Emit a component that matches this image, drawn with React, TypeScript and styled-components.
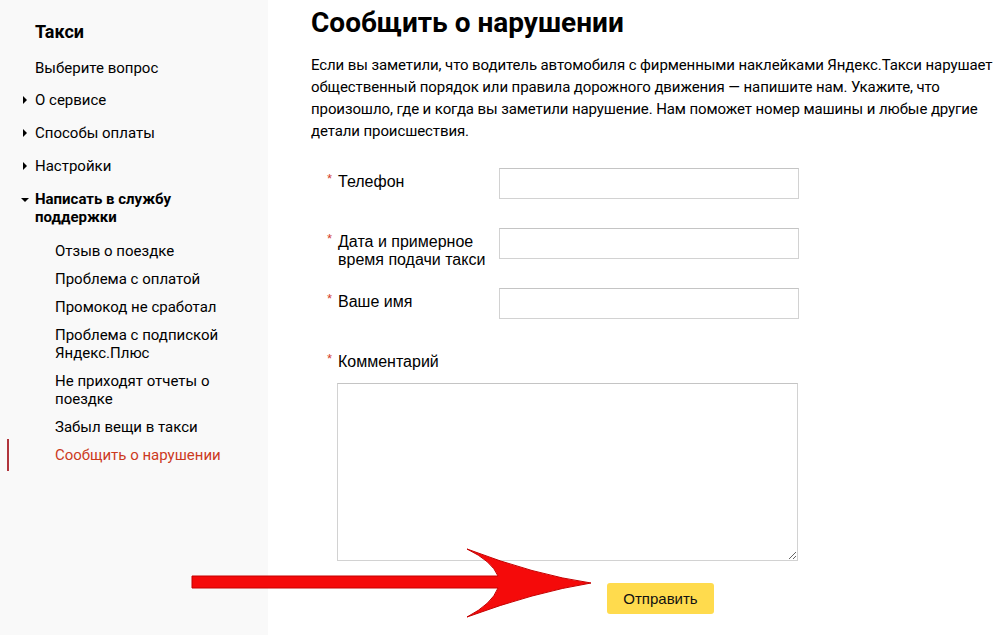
import { Fragment } from "react"
import styled, { createGlobalStyle } from "styled-components"

const Global = createGlobalStyle`
    html, body {
        margin: 0;
        padding: 0;
        background: #fff;
    }
    * {
        box-sizing: border-box;
    }
`

const Page = styled('div')`
    position: relative;
    display: flex;
    width: 1008px;
    height: 635px;
    overflow: hidden;
    font-family: Roboto, "Liberation Sans", Arial, sans-serif;
    color: #000;
`

const Sidebar = styled('aside')`
    width: 268px;
    flex-shrink: 0;
    background: #f9f9f9;
    padding: 21px 0 0 35px;

    .title {
        margin: 0 0 16px;
        font-size: 18px;
        line-height: 22px;
        font-weight: 700;
    }

    .hint {
        margin: 0 0 14px;
        font-size: 15px;
        line-height: 18px;
    }
`

const NavList = styled('ul')`
    list-style: none;
    margin: 0;
    padding: 0;
`

const NavItem = styled('li')<{ $open?: boolean }>`
    position: relative;
    margin-bottom: 15px;
    font-size: 15px;
    line-height: 18px;

    .caption {
        display: block;
        max-width: 150px;
        font-weight: ${p => p.$open ? 700 : 400};
    }

    &::before {
        content: "";
        position: absolute;
        top: ${p => p.$open ? '8px' : '5px'};
        left: ${p => p.$open ? '-14px' : '-12px'};
        border-style: solid;
        border-color: transparent;
        ${p => p.$open
            ? 'border-width: 4px 4px 0 4px; border-top-color: #000;'
            : 'border-width: 4px 0 4px 4px; border-left-color: #000;'}
    }
`

const SubList = styled('ul')`
    list-style: none;
    margin: 16px 0 0 20px;
    padding: 0;
`

const SubItem = styled('li')<{ $active?: boolean }>`
    position: relative;
    margin-bottom: 10px;
    font-size: 15px;
    line-height: 18px;
    max-width: 168px;
    color: ${p => p.$active ? '#cc3a1e' : '#000'};

    ${p => p.$active && `
        &::before {
            content: "";
            position: absolute;
            left: -48px;
            top: -7px;
            width: 2px;
            height: 32px;
            background: #b0343c;
        }
    `}
`

const Main = styled('main')`
    flex: 1;
    padding: 6px 0 0 43px;

    h1 {
        margin: 0 0 14px;
        font-size: 28px;
        line-height: 34px;
        font-weight: 700;
    }

    .intro {
        margin: 0 0 26px;
        font-size: 15px;
        line-height: 22px;
        letter-spacing: -0.1px;
        white-space: nowrap;
    }
`

const Form = styled('form')`
    padding-left: 16px;
    font-family: "Liberation Sans", Arial, sans-serif;
`

const Row = styled('div')`
    display: flex;
    align-items: flex-start;
    height: 60px;
`

const Label = styled('label')<{ $wide?: boolean }>`
    position: relative;
    display: block;
    width: ${p => p.$wide ? 'auto' : '172px'};
    padding: 5px 0 0 11px;
    font-size: 16px;
    line-height: 18px;

    span {
        position: absolute;
        left: 0;
        top: 2px;
        color: #d3402a;
        font-size: 13px;
    }
`

const Input = styled('input')`
    width: 300px;
    height: 31px;
    border: 1px solid #d2d2d2;
    border-top-color: #c4c4c4;
    background: #fff;
    outline: none;
    font-size: 15px;
`

const CommentBlock = styled('div')`
    display: flex;
    flex-direction: column;
    align-items: flex-start;
`

const TextArea = styled('textarea')`
    margin: 12px 0 0 10px;
    width: 461px;
    height: 178px;
    border: 1px solid #d2d2d2;
    border-top-color: #c4c4c4;
    background: #fff;
    outline: none;
`

const Submit = styled('button')`
    margin: 22px 0 0 280px;
    width: 107px;
    height: 31px;
    border: none;
    border-radius: 3px;
    background: #ffdb4d;
    font-family: "Liberation Sans", Arial, sans-serif;
    font-size: 15px;
    color: #111;
    cursor: pointer;
`

const Arrow = styled('svg')`
    position: absolute;
    left: 0;
    top: 0;
    pointer-events: none;
`

const subItems = [
    "Отзыв о поездке",
    "Проблема с оплатой",
    "Промокод не сработал",
    "Проблема с подпиской Яндекс.Плюс",
    "Не приходят отчеты о поездке",
    "Забыл вещи в такси",
]

const App = (): JSX.Element => {
    return (
        <Fragment>
            <Global />
            <Page>
                <Sidebar>
                    <p className="title">Такси</p>
                    <p className="hint">Выберите вопрос</p>
                    <NavList>
                        <NavItem><span className="caption">О сервисе</span></NavItem>
                        <NavItem><span className="caption">Способы оплаты</span></NavItem>
                        <NavItem><span className="caption">Настройки</span></NavItem>
                        <NavItem $open>
                            <span className="caption">Написать в службу поддержки</span>
                            <SubList>
                                {subItems.map((v, i) => <SubItem key={i}>{v}</SubItem>)}
                                <SubItem $active>Сообщить о нарушении</SubItem>
                            </SubList>
                        </NavItem>
                    </NavList>
                </Sidebar>

                <Main>
                    <h1>Сообщить о нарушении</h1>
                    <p className="intro">
                        Если вы заметили, что водитель автомобиля с фирменными наклейками Яндекс.Такси нарушает<br />
                        общественный порядок или правила дорожного движения — напишите нам. Укажите, что<br />
                        произошло, где и когда вы заметили нарушение. Нам поможет номер машины и любые другие<br />
                        детали происшествия.
                    </p>

                    <Form onSubmit={e => e.preventDefault()}>
                        <Row>
                            <Label><span>*</span>Телефон</Label>
                            <Input type="text" />
                        </Row>
                        <Row>
                            <Label><span>*</span>Дата и примерное время подачи такси</Label>
                            <Input type="text" />
                        </Row>
                        <Row>
                            <Label><span>*</span>Ваше имя</Label>
                            <Input type="text" />
                        </Row>
                        <CommentBlock>
                            <Label $wide><span>*</span>Комментарий</Label>
                            <TextArea />
                            <Submit type="submit">Отправить</Submit>
                        </CommentBlock>
                    </Form>
                </Main>

                <Arrow width="1008" height="635" viewBox="0 0 1008 635">
                    <path
                        d="M192,576 L498,576 Q492,561 467,549 Q535,575 591,583 Q535,592 467,617 Q492,604 498,588 L192,588 Z"
                        fill="#f50a0a"
                        stroke="#c40000"
                        strokeWidth="1"
                    />
                </Arrow>
            </Page>
        </Fragment>
    )
}

export default App
